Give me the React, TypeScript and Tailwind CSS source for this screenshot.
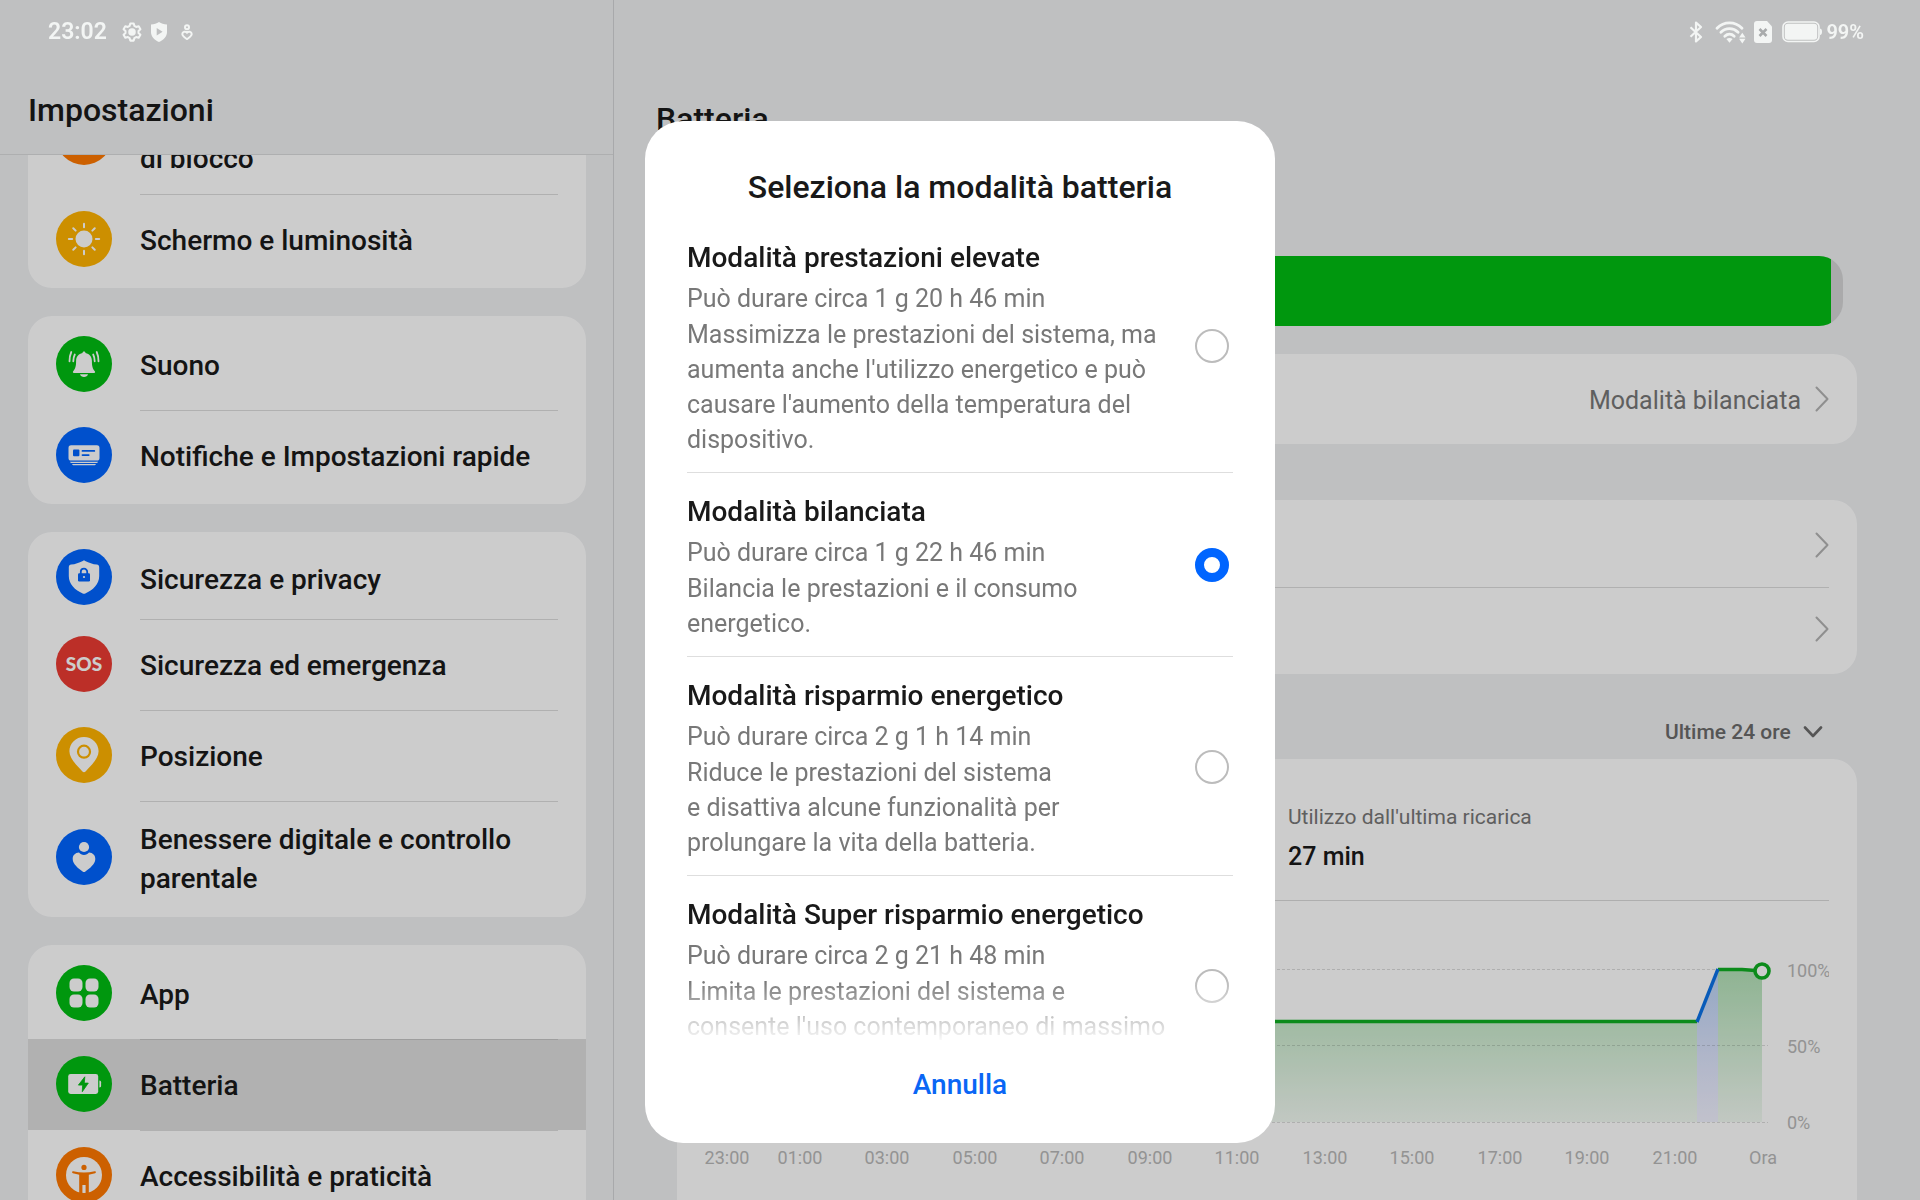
import { Fragment, useState, type ReactNode } from "react";

const GREEN = "#00bd12";
const BLUE = "#0065ff";

/* ---------- Sidebar icons, drawn on a 56 unit disc ---------- */

function SunIcon() {
  return (
    <g>
      <circle cx="28" cy="28" r="8.5" />
      <g stroke="#fff" strokeWidth="2" strokeLinecap="round">
        {[0, 45, 90, 135, 180, 225, 270, 315].map((a) => (
          <path key={a} d="M28 16.2v-3.4" transform={`rotate(${a} 28 28)`} />
        ))}
      </g>
    </g>
  );
}

function BellIcon() {
  return (
    <g>
      <path d="M28 15.6c.9 0 1.4.6 1.5 1.4 4 .7 6.4 3.9 6.4 8 0 5.2.7 7.5 2.9 10.2.6.8.3 1.7-.7 1.7H17.900c-1 0-1.300-.9-.7-1.700 2.200-2.700 2.900-5 2.900-10.200 0-4.100 2.400-7.300 6.400-8 .1-.8.6-1.400 1.500-1.400Z" />
      <path d="M24 38.2h8c-.5 1.700-2 2.800-4 2.800s-3.500-1.100-4-2.800Z" />
      <g fill="none" stroke="#fff" strokeWidth="1.8" strokeLinecap="round">
        <path d="M18.8 18.500c-1 2-1.500 4.200-1.500 6.800M15.300 16c-1.200 2.600-1.800 5.800-1.800 9.300" />
        <path d="M37.2 18.500c1 2 1.500 4.200 1.500 6.800M40.700 16c1.200 2.600 1.800 5.800 1.800 9.300" />
      </g>
    </g>
  );
}

function NotificationIcon() {
  return (
    <g>
      <rect x="12.5" y="18.3" width="31" height="15.2" rx="2.6" />
      <path d="M14 34.7h28c-.3 1-1 1.400-2 1.400H16c-1 0-1.700-.4-2-1.400ZM16 37.100h24c-.4.900-1 1.200-2 1.200H18c-1 0-1.600-.3-2-1.200Z" />
      <g fill={BLUE}>
        <rect x="17" y="22.6" width="6.4" height="6.6" rx="1" />
        <rect x="25.6" y="23" width="13.6" height="1.8" rx=".9" />
        <rect x="25.6" y="27.2" width="8" height="1.8" rx=".9" />
      </g>
    </g>
  );
}

function ShieldLockIcon() {
  return (
    <g>
      <path d="M28 11.600c.4 0 .8.1 1.200.3 3.800 1.900 7.500 3.100 11.600 3.700 1.500.2 2.400 1.200 2.400 2.700V27c0 8-6.300 14.300-13.900 17.400-.9.400-1.700.4-2.600 0C19.100 41.300 12.800 35 12.800 27v-8.700c0-1.500.9-2.500 2.400-2.700 4.100-.6 7.800-1.800 11.600-3.700.4-.2.800-.3 1.200-.3Z" />
      <rect x="22" y="24.2" width="12" height="8.2" rx="1.2" fill={BLUE} />
      <path d="M24.8 25v-2.200a3.200 3.200 0 0 1 6.400 0V25" fill="none" stroke={BLUE} strokeWidth="1.8" />
      <circle cx="28" cy="28" r="1.1" />
    </g>
  );
}

function PinIcon() {
  return (
    <g>
      <path d="M28 10c8.200 0 14.600 6.400 14.600 14.300 0 7.500-7.600 14-12.800 19.900-1.200 1.300-2.400 1.300-3.600 0C21 38.300 13.400 31.800 13.400 24.300 13.400 16.400 19.800 10 28 10Z" />
      <circle cx="28" cy="24.7" r="6" fill="none" stroke="#ffb300" strokeWidth="2.2" />
    </g>
  );
}

function WellbeingIcon() {
  return (
    <g>
      <circle cx="28" cy="18" r="5.1" />
      <path d="M23 23.600c1.200 1.400 3 2.300 5 2.300s3.800-.9 5-2.300c3.800.2 6.300 2.800 6.300 6.300 0 5.400-5.900 9.400-9.900 12.600-.9.700-1.900.7-2.800 0-4-3.200-9.900-7.200-9.900-12.600 0-3.500 2.500-6.100 6.300-6.300Z" />
    </g>
  );
}

function AppsIcon() {
  return (
    <g>
      <rect x="13.5" y="13.5" width="13" height="13" rx="4.5" />
      <rect x="29.5" y="13.5" width="13" height="13" rx="4.5" />
      <rect x="13.5" y="29.5" width="13" height="13" rx="4.5" />
      <rect x="29.5" y="29.5" width="13" height="13" rx="4.5" />
    </g>
  );
}

function BatteryIcon() {
  return (
    <g>
      <rect x="12.2" y="18" width="30" height="20" rx="2.4" />
      <path d="M43.4 24.400c1.200.2 1.700.8 1.700 1.800v3.600c0 1-.5 1.600-1.700 1.800Z" />
      <path d="M28.8 20.800 22.400 29.100h4.200l-.3 6.600 6-8.600h-4Z" fill={GREEN} stroke={GREEN} strokeWidth=".8" strokeLinejoin="round" />
    </g>
  );
}

function AccessibilityIcon() {
  return (
    <g>
      <circle cx="28" cy="28" r="18" />
      <g fill="#ff7900">
        <circle cx="28" cy="20.4" r="2.6" />
        <path d="M17.3 24.300c7 1.600 14.400 1.600 21.400 0 1.400-.3 1.700 1.500.4 1.900l-6.300 1.500V46h-3.200v-8h-3.200v8h-3.200V27.700l-6.300-1.500c-1.300-.4-1-2.200.4-1.900Z" />
      </g>
    </g>
  );
}

function Disc({ color, children }: { color: string; children?: ReactNode }) {
  return (
    <svg viewBox="0 0 56 56" className="size-14 shrink-0" fill="#fff" aria-hidden="true">
      <circle cx="28" cy="28" r="28" fill={color} />
      {children}
    </svg>
  );
}

/* ---------- Status bar ---------- */

function StatusBar() {
  return (
    <header className="fixed inset-x-0 top-0 z-30 flex h-16 items-center justify-between pr-14 pl-12 font-semibold text-[#f3f5f4]">
      <div className="flex items-center">
        <time className="text-[23px] leading-8">23:02</time>
        <svg viewBox="0 0 24 24" className="ml-3.5 size-[22px]" fill="none" stroke="currentColor" strokeWidth="2.2" strokeLinejoin="round" aria-hidden="true">
          <path d="M10.1 2.600h3.800l.7 2.800 1.900 1.100 2.800-.8 1.900 3.300-2.100 2v2l2.100 2-1.900 3.300-2.800-.8-1.900 1.100-.7 2.800h-3.800l-.7-2.800-1.900-1.100-2.800.8L2.800 15l2.100-2v-2L2.800 9l1.900-3.300 2.800.8 1.900-1.100Z" />
          <circle cx="12" cy="12" r="3" fill="currentColor" />
        </svg>
        <svg viewBox="0 0 16 20" className="ml-2 h-5 w-4" fill="currentColor" aria-hidden="true">
          <path fillRule="evenodd" d="M8 0c2.300 1.400 4.800 2.300 8 2.600v7.600c0 4.300-3.500 7.700-8 9.800-4.500-2.100-8-5.500-8-9.800V2.600C3.200 2.300 5.700 1.400 8 0ZM5.700 6v7.600L11.600 9.800Z" />
        </svg>
        <svg viewBox="0 0 12 16" className="ml-3.5 h-4 w-3" fill="none" stroke="currentColor" strokeWidth="2" aria-hidden="true">
          <circle cx="6" cy="3.2" r="2" />
          <path d="M6 8.600C4.700 7 1.300 7.400 1.300 10.100c0 2.100 2.600 3.600 4.700 5 2.100-1.400 4.700-2.900 4.700-5C10.700 7.400 7.300 7 6 8.600Z" />
        </svg>
      </div>
      <div className="flex items-center">
        <svg viewBox="0 0 14 22" className="h-[22px] w-[14px]" fill="none" stroke="currentColor" strokeWidth="2.2" strokeLinejoin="round" aria-hidden="true">
          <path d="M1.5 6.200 12 16l-5 4.400V1.600L12 6 1.500 15.800" />
        </svg>
        <svg viewBox="0 0 31 24" className="ml-3 h-6 w-[31px]" fill="none" stroke="currentColor" strokeWidth="2.8" strokeLinecap="round" aria-hidden="true">
          <path d="M2 8.200C9 1 20 1 27 8.200M5.900 12.300c4.900-4.800 12.300-4.800 17.200 0M9.800 16.200c2.700-2.600 6.700-2.600 9.400 0" />
          <path d="M11.4 19c1.700-1.500 4.500-1.500 6.200 0l-3.100 3.800Z" fill="currentColor" stroke="none" />
          <path d="m27.3 12.800 3.200 4.600h-6.400ZM27.300 23.400l3.200-4.600h-6.400Z" fill="currentColor" stroke="none" />
        </svg>
        <svg viewBox="0 0 18 22" className="ml-2 h-[22px] w-[18px]" aria-hidden="true">
          <path d="M3 0h10l5 5.500V19a3 3 0 0 1-3 3H3a3 3 0 0 1-3-3V3a3 3 0 0 1 3-3Z" fill="currentColor" />
          <path d="m5.5 8 7 7m0-7-7 7" stroke="#a9abac" strokeWidth="2.6" />
        </svg>
        <svg viewBox="0 0 40 22" className="ml-[10px] h-[22px] w-10" aria-hidden="true">
          <rect x="1" y="1" width="36" height="19.5" rx="5" fill="none" stroke="currentColor" strokeWidth="1.6" />
          <rect x="2.8" y="2.8" width="32.4" height="16" rx="3.2" fill="currentColor" />
          <path d="M38 7.500c1.500.3 2 1.500 2 3.300s-.5 3-2 3.300Z" fill="currentColor" />
        </svg>
        <span className="ml-1 text-[20px] leading-8">99%</span>
      </div>
    </header>
  );
}

/* ---------- Sidebar ---------- */

type Row = {
  label: ReactNode;
  icon: ReactNode;
  kind?: "tight" | "tall" | "normal";
  active?: boolean;
};

const groups: Row[][] = [
  [
    { label: <span className="block pt-[39px]">di blocco</span>, icon: <Disc color="#ff7900" />, kind: "tall" },
    { label: "Schermo e luminosità", icon: <Disc color="#ffb300"><SunIcon /></Disc> },
  ],
  [
    { label: "Suono", icon: <Disc color={GREEN}><BellIcon /></Disc> },
    { label: "Notifiche e Impostazioni rapide", icon: <Disc color={BLUE}><NotificationIcon /></Disc> },
  ],
  [
    { label: "Sicurezza e privacy", icon: <Disc color={BLUE}><ShieldLockIcon /></Disc>, kind: "tight" },
    {
      label: "Sicurezza ed emergenza",
      icon: (
        <span className="flex size-14 shrink-0 items-center justify-center rounded-full bg-[#eb3b32] font-['Lato'] text-[19px] leading-6 font-black text-white" aria-hidden="true">
          SOS
        </span>
      ),
    },
    { label: "Posizione", icon: <Disc color="#ffb300"><PinIcon /></Disc> },
    { label: "Benessere digitale e controllo parentale", icon: <Disc color={BLUE}><WellbeingIcon /></Disc>, kind: "tall" },
  ],
  [
    { label: "App", icon: <Disc color={GREEN}><AppsIcon /></Disc> },
    { label: "Batteria", icon: <Disc color={GREEN}><BatteryIcon /></Disc>, active: true },
    { label: "Accessibilità e praticità", icon: <Disc color="#ff7900"><AccessibilityIcon /></Disc> },
  ],
];

const rowHeight = { tight: "min-h-[84px]", normal: "min-h-[91px] pb-0.5", tall: "min-h-[113px] pb-0.5" };

function Sidebar() {
  return (
    <aside className="flex w-[614px] shrink-0 flex-col border-r border-[#d3d4d6]">
      <div className="border-b border-[#dadbdd] pt-[90px] pb-6 pl-7">
        <h1 className="text-[32px] leading-10 font-medium">Impostazioni</h1>
      </div>
      <nav className="min-h-0 flex-1 overflow-hidden pr-[27px] pl-7">
        <div className="-mt-[77px] flex flex-col gap-7">
          {groups.map((rows, g) => (
            <ul key={g} className="rounded-[24px] bg-white py-[3px]">
              {rows.map((row, i) => (
                <li key={i} className={row.active ? "bg-[#dedede]" : ""}>
                  {i > 0 && <div className={`mr-7 -mb-px ml-28 h-px ${row.active ? "bg-[#c6c6c6]" : "bg-[#dcdcdc]"}`} />}
                  <a href="#" className={`flex items-center gap-7 px-7 ${rowHeight[row.kind ?? "normal"]}`}>
                    {row.icon}
                    <span className="pt-1 text-[28px] leading-[39px] font-medium">{row.label}</span>
                  </a>
                </li>
              ))}
            </ul>
          ))}
        </div>
      </nav>
    </aside>
  );
}

/* ---------- Battery page ---------- */

function Chevron() {
  return (
    <svg viewBox="0 0 14 26" className="h-[26px] w-[14px] shrink-0" fill="none" stroke="#b3b3b3" strokeWidth="2" strokeLinecap="round" strokeLinejoin="round" aria-hidden="true">
      <path d="M1.5 1.500 12.500 13 1.500 24.500" />
    </svg>
  );
}

const hours: [string, number][] = [
  ["23:00", 22], ["01:00", 95], ["03:00", 182], ["05:00", 270], ["07:00", 357], ["09:00", 445],
  ["11:00", 532], ["13:00", 620], ["15:00", 707], ["17:00", 795], ["19:00", 882], ["21:00", 970], ["Ora", 1058],
];

function BatteryChart() {
  return (
    <svg viewBox="0 0 1124 340" className="block w-full font-['Roboto']" role="img" aria-label="Livello della batteria nelle ultime 24 ore">
      <defs>
        <linearGradient id="levelGreen" gradientUnits="userSpaceOnUse" x1="0" y1="68" x2="0" y2="221">
          <stop offset="0" stopColor="#009c10" stopOpacity=".3" />
          <stop offset="1" stopColor="#009c10" stopOpacity=".05" />
        </linearGradient>
        <linearGradient id="levelBlue" gradientUnits="userSpaceOnUse" x1="0" y1="68" x2="0" y2="221">
          <stop offset="0" stopColor="#0060d8" stopOpacity=".28" />
          <stop offset="1" stopColor="#4050ff" stopOpacity=".07" />
        </linearGradient>
      </defs>
      <path d="M22 120h970v101H22ZM1013 68h24l20 2v151h-44Z" fill="url(#levelGreen)" />
      <path d="m992 120 21-52v153h-21Z" fill="url(#levelBlue)" />
      <g stroke="#000" strokeOpacity=".14" strokeDasharray="3 2">
        <path d="M22 68.500h1041M22 144.500h1041M22 221.500h1041" />
      </g>
      <g fill="none" strokeWidth="3.400">
        <path d="M22 120.500h970M1013 68.500h24l20 1.500" stroke="#0fae22" />
        <path d="m992 121 21-53" stroke="#0a72e8" />
      </g>
      <circle cx="1057" cy="70" r="7" fill="#fff" stroke="#0fae22" strokeWidth="3.6" />
      <g fill="#b8b8b8" fontSize="18">
        <text x="1082" y="76">100%</text>
        <text x="1082" y="152">50%</text>
        <text x="1082" y="228">0%</text>
        {hours.map(([label, x]) => (
          <text key={label} x={x} y="263" textAnchor="middle">{label}</text>
        ))}
      </g>
    </svg>
  );
}

function BatteryPage() {
  return (
    <main className="flex min-w-0 flex-1 flex-col">
      <h2 className="pt-[99px] pl-[42px] text-[32px] leading-10 font-medium">Batteria</h2>
      <div className="mt-[117px] flex flex-col px-[63px]">
        <div className="mx-[14px] h-[70px] overflow-hidden rounded-[24px] bg-[#d5d5d6]">
          <div className="h-full w-[99%] bg-[#00bd12]" />
        </div>
        <section className="mt-7 rounded-[24px] bg-white px-7 py-[3px]">
          <a href="#" className="flex h-[84px] items-center justify-end gap-[14px]">
            <span className="pt-0.5 text-[25px] leading-[35px] text-[#777]">Modalità bilanciata</span>
            <Chevron />
          </a>
        </section>
        <section className="mt-14 rounded-[24px] bg-white px-7 py-[3px]">
          <a href="#" aria-label="Impostazioni avanzate" className="flex h-[84px] items-center justify-end"><Chevron /></a>
          <a href="#" aria-label="Altre impostazioni" className="flex h-[84px] items-center justify-end border-t border-[#dcdcdc] pb-0.5"><Chevron /></a>
        </section>
        <div className="flex h-[85px] items-center justify-end gap-3 pt-[31px] pr-[34px]">
          <select aria-label="Intervallo di tempo" defaultValue="24" className="appearance-none bg-transparent text-[21px] leading-7 font-medium text-[#6b6b6b]">
            <option value="24">Ultime 24 ore</option>
          </select>
          <svg viewBox="0 0 20 12" className="h-3 w-5" fill="none" stroke="#6b6b6b" strokeWidth="2.6" strokeLinecap="round" strokeLinejoin="round" aria-hidden="true">
            <path d="m2 1.500 8 8.500 8-8.500" />
          </svg>
        </div>
        <section className="rounded-[24px] bg-white px-7">
          <dl className="grid grid-cols-2 gap-[42px] border-b border-[#dadada] pt-11 pb-[25px]">
            <div className="col-start-2">
              <dt className="text-[21px] leading-7 text-[#777]">Utilizzo dall'ultima ricarica</dt>
              <dd className="mt-2 text-[25px] leading-9 font-medium">27 min</dd>
            </div>
          </dl>
          <BatteryChart />
        </section>
      </div>
    </main>
  );
}

/* ---------- Dialog ---------- */

const modes = [
  { id: "performance", name: "Modalità prestazioni elevate", time: "Può durare circa 1 g 20 h 46 min", text: "Massimizza le prestazioni del sistema, ma aumenta anche l'utilizzo energetico e può causare l'aumento della temperatura del dispositivo." },
  { id: "balanced", name: "Modalità bilanciata", time: "Può durare circa 1 g 22 h 46 min", text: "Bilancia le prestazioni e il consumo energetico." },
  { id: "saver", name: "Modalità risparmio energetico", time: "Può durare circa 2 g 1 h 14 min", text: "Riduce le prestazioni del sistema e\u00a0disattiva alcune funzionalità per prolungare la vita della batteria." },
  { id: "super", name: "Modalità Super risparmio energetico", time: "Può durare circa 2 g 21 h 48 min", text: "Limita le prestazioni del sistema e consente l'uso contemporaneo di massimo" },
];

function ModeDialog() {
  const [selected, setSelected] = useState("balanced");
  return (
    <div className="fixed inset-0 z-20 flex items-start justify-center bg-black/20 pt-[121px]">
      <div role="dialog" aria-modal="true" aria-labelledby="mode-title" className="w-[630px] rounded-[38px] bg-white px-[42px] pt-[46px] pb-[22px]">
        <h2 id="mode-title" className="text-center text-[32px] leading-10 font-medium">Seleziona la modalità batteria</h2>
        <div role="radiogroup" aria-labelledby="mode-title" className="mt-3 h-[829px] overflow-hidden mask-[linear-gradient(to_bottom,#000_762px,transparent_824px)]">
          {modes.map((mode, i) => (
            <Fragment key={mode.id}>
              {i > 0 && <hr className="border-[#dedede]" />}
              <label htmlFor={mode.id} className={`flex items-center justify-between pt-5 pr-1 pb-[15px] ${mode.id === "super" ? "min-h-[218px]" : ""}`}>
                <span className="w-[482px] self-start">
                  <span className="block text-[28px] leading-[38px] font-medium">{mode.name}</span>
                  <span className="mt-1 block text-[25px] leading-[35px] text-[#787878]">{mode.time}</span>
                  <span className="mt-px block text-[25px] leading-[35px] text-[#787878]">{mode.text}</span>
                </span>
                <input
                  id={mode.id}
                  type="radio"
                  name="mode"
                  checked={selected === mode.id}
                  onChange={() => setSelected(mode.id)}
                  className="mb-1 size-[34px] shrink-0 appearance-none rounded-full border-2 border-[#bcbcbc] checked:border-[9px] checked:border-[#0065ff]"
                />
              </label>
            </Fragment>
          ))}
        </div>
        <button type="button" className="block h-[73px] w-full text-center text-[28px] leading-10 font-medium text-[#0a66f5]">Annulla</button>
      </div>
    </div>
  );
}

export default function App() {
  return (
    <div className="flex h-screen overflow-hidden bg-[#eff0f2] font-['Roboto',sans-serif] text-[#191919]">
      <StatusBar />
      <Sidebar />
      <BatteryPage />
      <ModeDialog />
    </div>
  );
}
